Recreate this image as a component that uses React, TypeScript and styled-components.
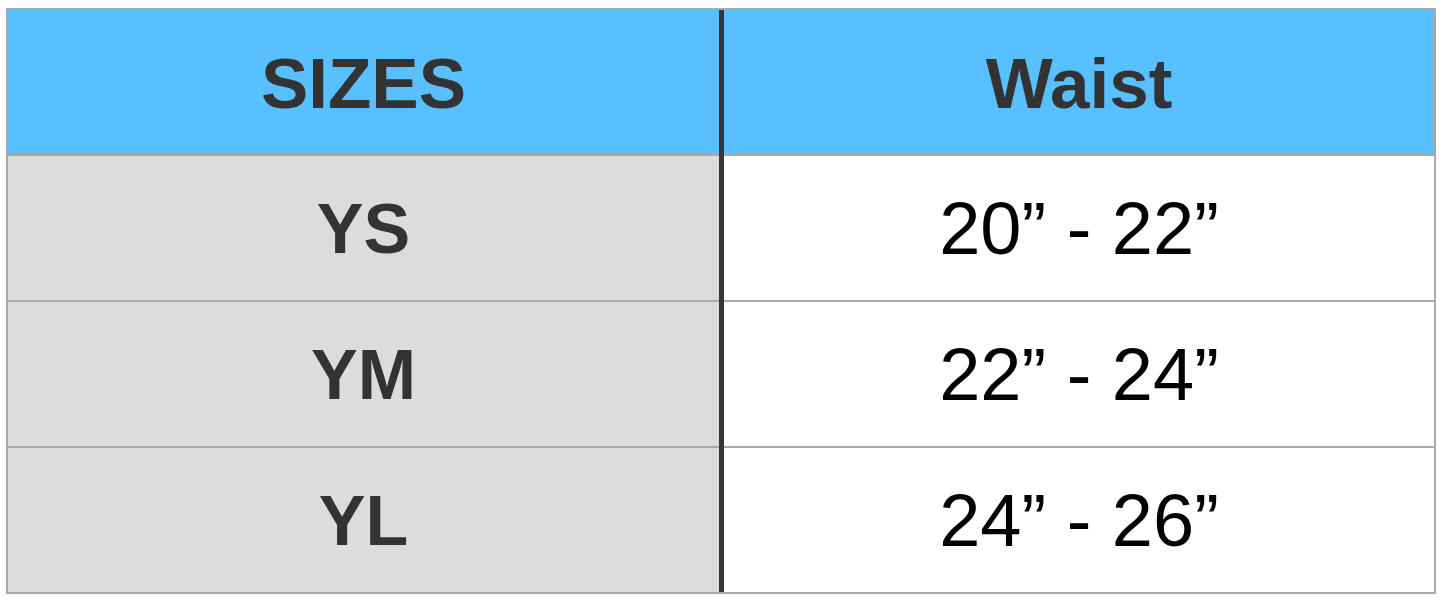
import React from 'react';
import styled, { createGlobalStyle } from 'styled-components';

const GlobalStyle = createGlobalStyle`
  html, body {
    margin: 0;
    padding: 0;
    background: #ffffff;
  }
`;

const Page = styled.div`
  padding: 8px 9px 0 6px;
  font-family: 'Liberation Sans', Arial, Helvetica, sans-serif;
`;

const Chart = styled.div`
  position: relative;
  border: 2px solid #a9a9a9;
  display: grid;
  grid-template-columns: 711px 1fr;
  grid-auto-rows: 144px;
  row-gap: 2px;
  column-gap: 5px;
  background: #a9a9a9;

  /* dark divider running the full height between the columns */
  &::after {
    content: '';
    position: absolute;
    top: 0;
    bottom: 0;
    left: 711px;
    width: 5px;
    background: #363636;
  }
`;

const Cell = styled.div<{ $head?: boolean; $left?: boolean }>`
  display: flex;
  align-items: center;
  justify-content: center;
  background: ${(p) => (p.$head ? '#58c0ff' : p.$left ? '#dcdcdc' : '#ffffff')};
  color: ${(p) => (p.$head || p.$left ? '#333333' : '#000000')};
  font-weight: ${(p) => (p.$head || p.$left ? 700 : 400)};
  font-size: ${(p) => (p.$head ? '71px' : p.$left ? '70px' : '74px')};
  line-height: 1;
  padding-top: 2px;
`;

const sizes = [
  { size: 'YS', waist: '20” - 22”' },
  { size: 'YM', waist: '22” - 24”' },
  { size: 'YL', waist: '24” - 26”' },
];

const App = () => (
  <>
    <GlobalStyle />
    <Page>
      <Chart>
        <Cell $head $left>SIZES</Cell>
        <Cell $head>Waist</Cell>
        {sizes.map((row) => (
          <React.Fragment key={row.size}>
            <Cell $left>{row.size}</Cell>
            <Cell>{row.waist}</Cell>
          </React.Fragment>
        ))}
      </Chart>
    </Page>
  </>
);

export default App;
